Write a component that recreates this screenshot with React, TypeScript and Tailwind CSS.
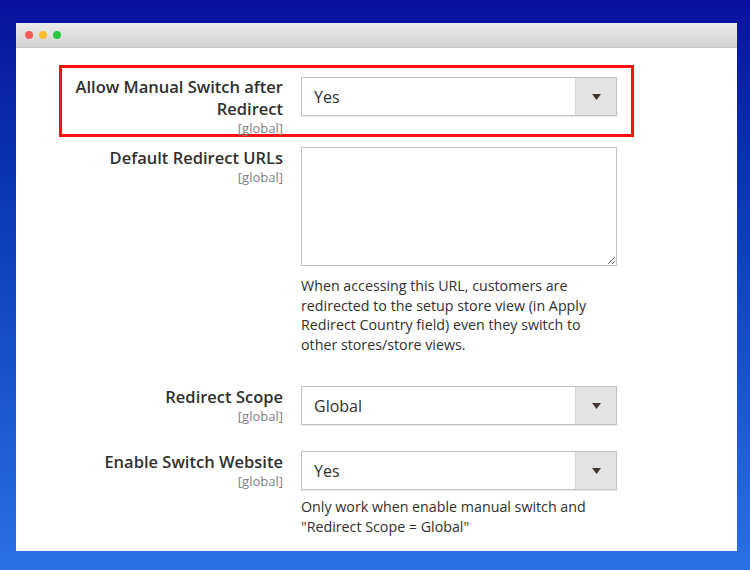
import React from "react";

const font = { fontFamily: "'Open Sans', 'Noto Sans', sans-serif" };

const Label = ({ lines, className = "" }: { lines: string[]; className?: string }) => (
  <div className={`w-[221px] shrink-0 text-right ${className}`}>
    {lines.map((l) => (
      <div key={l} className="text-[16.5px] leading-[22px] font-semibold text-[#303030]">
        {l}
      </div>
    ))}
    <div className="text-[13px] leading-[16px] text-[#808080]">[global]</div>
  </div>
);

const Select = ({ value }: { value: string }) => (
  <div className="flex h-[39px] w-[316px] border border-[#c2c2c2] bg-white shadow-[0_1px_1px_rgba(0,0,0,0.08)]">
    <div className="flex-1 flex items-center pl-[12px] pt-[1px] text-[16px] text-[#303030]">{value}</div>
    <div className="w-[41px] flex items-center justify-center bg-[#e3e3e3] border-l border-[#d6d6d6]">
      <svg width="9" height="6" viewBox="0 0 9 6">
        <path d="M0 0 L9 0 L4.5 6 Z" fill="#41362f" />
      </svg>
    </div>
  </div>
);

const Help = ({ children }: { children: React.ReactNode }) => (
  <p className="w-[316px] text-[14.25px] leading-[19.5px] text-[#303030]">{children}</p>
);

export default function App() {
  return (
    <div
      className="w-[750px] h-[570px] pt-[23px] pl-[16px] bg-gradient-to-b from-[#0a0f9f] to-[#2a70e6]"
      style={font}
    >
      <div className="w-[721px] h-[528px] bg-white flex flex-col">
        {/* title bar */}
        <div className="h-[25px] flex items-center gap-[6px] pl-[9px] bg-gradient-to-b from-[#ebebeb] to-[#d3d3d3] border-b border-[#c8c8c8]">
          <span className="w-[8px] h-[8px] rounded-full bg-[#fc5b57]" />
          <span className="w-[8px] h-[8px] rounded-full bg-[#fdbc2e]" />
          <span className="w-[8px] h-[8px] rounded-full bg-[#28c840]" />
        </div>

        <div className="pl-[43px] pt-[17px] flex flex-col">
          {/* highlighted row */}
          <div className="w-[575px] h-[72px] border-[3px] border-[#ff1010] flex gap-[18px]">
            <Label lines={["Allow Manual Switch after", "Redirect"]} className="pt-[8px]" />
            <div className="pt-[9px]">
              <Select value="Yes" />
            </div>
          </div>

          <div className="mt-[10px] pl-[3px] flex gap-[18px]">
            <Label lines={["Default Redirect URLs"]} />
            <div className="flex flex-col gap-[10px]">
              <textarea className="w-[316px] h-[119px] border border-[#c2c2c2] outline-none" />
              <Help>
                When accessing this URL, customers are redirected to the setup store view (in Apply
                Redirect Country field) even they switch to other stores/store views.
              </Help>
            </div>
          </div>

          <div className="mt-[32px] pl-[3px] flex gap-[18px]">
            <Label lines={["Redirect Scope"]} />
            <Select value="Global" />
          </div>

          <div className="mt-[26px] pl-[3px] flex gap-[18px]">
            <Label lines={["Enable Switch Website"]} />
            <div className="flex flex-col gap-[7px]">
              <Select value="Yes" />
              <Help>
                Only work when enable manual switch and "Redirect Scope = Global"
              </Help>
            </div>
          </div>
        </div>
      </div>
    </div>
  );
}
